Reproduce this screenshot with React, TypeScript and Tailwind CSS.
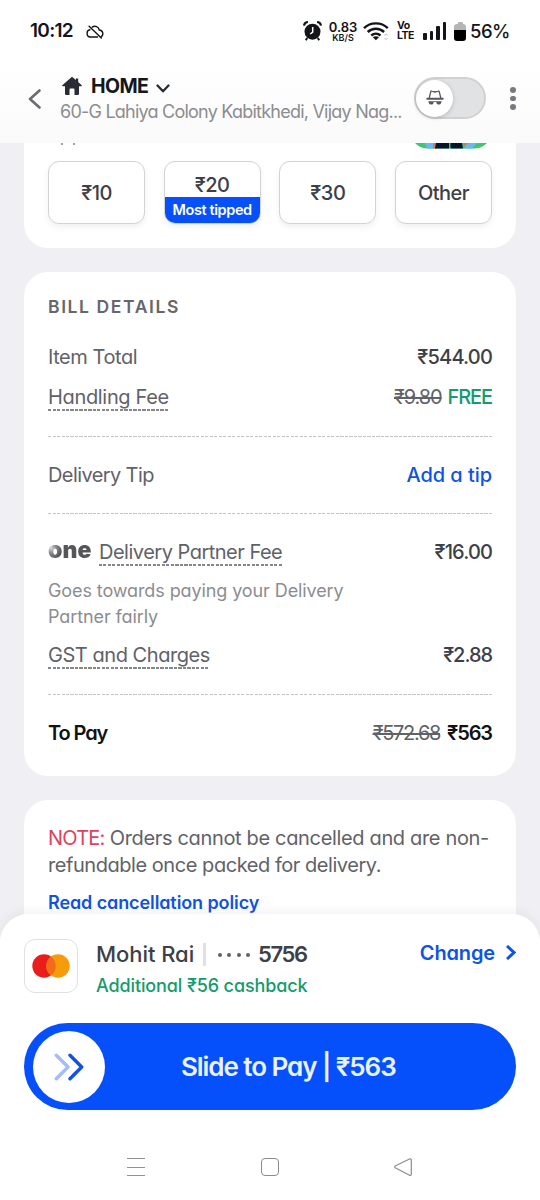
import type { ReactNode } from "react";
import { clsx } from "clsx";

const StatusBar = () => (
	<div className="flex h-[62px] shrink-0 items-center justify-between pl-[30px] pr-[31px] text-[#141518]">
		<div className="flex items-center gap-[13px]">
			<span className="w-[43px] whitespace-nowrap text-[19px] font-semibold tracking-[-0.7px]">
				10:12
			</span>
			<svg className="mt-px h-[14px] w-[18px]" viewBox="0 0 18 14" fill="none" stroke="currentColor" strokeWidth="1.4" strokeLinecap="round">
				<path d="M6.2 2.1C9 .3 12.6 1.5 13.3 5c4 .2 4.6 5.2 1.8 6.8" />
				<path d="M3.9 4.8C.2 5.2 0 11.8 4.2 12h7.4" />
				<path d="M3.1 1.2l12.2 11.9" />
			</svg>
		</div>
		<div className="flex items-center">
			<svg className="h-5 w-[19px]" viewBox="0 0 19 20" fill="currentColor">
				<circle cx="9.5" cy="10.7" r="8" />
				<path d="M1 4.6C1.3 2.6 2.9 1.2 4.9 1M18 4.6c-.3-2-1.9-3.4-3.9-3.6" fill="none" stroke="currentColor" strokeWidth="2.2" />
				<path d="M4.2 17l-1.4 2.2M14.8 17l1.4 2.2" stroke="currentColor" strokeWidth="2" />
				<path d="M9.7 6v5.2L7.2 13" fill="none" stroke="#fff" strokeWidth="1.5" />
			</svg>
			<div className="ml-[7px] flex w-[28px] flex-col items-center whitespace-nowrap font-semibold">
				<span className="text-[13px] leading-[12px]">0.83</span>
				<span className="text-[9px] leading-[9px]">KB/S</span>
			</div>
			<svg className="ml-[6px] h-5 w-[26px]" viewBox="0 0 26 20" fill="none" stroke="currentColor" strokeWidth="2.4">
				<path d="M1 7.2c6.5-6.4 17.3-6.4 23.8 0" />
				<path d="M4.7 11c4.6-4.3 11.8-4.3 16.4 0" />
				<path d="M8.3 14.5c2.7-2.3 6.5-2.3 9.2 0" />
				<path d="M9.8 16.2c1.9-1.4 4.3-1.4 6.2 0l-3.1 3z" fill="currentColor" stroke="none" />
				<path d="M21.5 14.5l1.6-1.7 1.6 1.7M21.5 17l1.6 1.7 1.6-1.7" stroke="#bbb" strokeWidth="1" />
			</svg>
			<div className="ml-[8px] flex w-[17px] flex-col whitespace-nowrap text-[10.5px] font-bold leading-[10px] tracking-[-0.5px]">
				<span>Vo</span>
				<span>LTE</span>
			</div>
			<div className="ml-[9px] flex h-[18px] w-[23px] items-end justify-between">
				<i className="h-[7px] w-[3.5px] rounded-[1px] bg-current" />
				<i className="h-[9.5px] w-[3.5px] rounded-[1px] bg-current" />
				<i className="h-[14px] w-[3.5px] rounded-[1px] bg-current" />
				<i className="h-[18px] w-[3.5px] rounded-[1px] bg-current" />
			</div>
			<div className="ml-[8px] flex flex-col items-center">
				<i className="h-[2px] w-[5px] rounded-t-[1px] bg-[#b5b5b5]" />
				<i className="h-[6px] w-3 rounded-t-[3px] bg-[#b5b5b5]" />
				<i className="h-[11px] w-3 rounded-b-[3px] bg-black" />
			</div>
			<span className="ml-[4px] w-[39px] whitespace-nowrap pt-[2px] text-[18.5px] font-medium tracking-[-0.5px]">
				56%
			</span>
		</div>
	</div>
);

const AddressBar = () => (
	<div className="flex h-[81px] shrink-0 items-start bg-gradient-to-b from-white to-[#fafafb] pl-[28px] pt-[12px]">
		<svg className="mt-[15px] h-[20px] w-[13px]" viewBox="0 0 13 20" fill="none" stroke="#6a6c72" strokeWidth="2.6" strokeLinecap="round" strokeLinejoin="round">
			<path d="M11.5 1.5L2 10l9.5 8.5" />
		</svg>
		<div className="ml-[19px] w-[345px]">
			<div className="flex h-[26px] items-center">
				<svg className="-mt-[3px] ml-[2px] h-[20px] w-[20px]" viewBox="0 0 20 20" fill="#282c34">
					<path d="M10 .7L.3 9.2q-.5.8.4 1H3v7.6q0 1.200 1.200 1.200h3.300v-5.500q0-1 1-1h3q1 0 1 1V19h3.300q1.200 0 1.200-1.200v-7.600h2.300q.9-.2.400-1L16.200 6V2.600h-2.300V4z" />
				</svg>
				<h1 className="ml-[9px] w-[58px] whitespace-nowrap text-[19.5px] font-bold tracking-[-0.55px] text-[#15171c]">
					HOME
				</h1>
				<svg className="ml-[7px] mt-[3px] h-[9px] w-[14px]" viewBox="0 0 14 9" fill="none" stroke="#282c34" strokeWidth="2.3" strokeLinecap="round" strokeLinejoin="round">
					<path d="M1.5 1.5L7 7.3l5.5-5.8" />
				</svg>
			</div>
			<p className="whitespace-nowrap text-[18px] leading-[24px] tracking-[-0.77px] text-[#8c8d90]">
				60-G Lahiya Colony Kabitkhedi, Vijay Nag...
			</p>
		</div>
		<div className="ml-[9px] mt-[3px] flex h-[42px] w-[72px] items-center rounded-full border-2 border-[#d0d1d3] bg-[#e1e2e4]">
			<div className="flex size-[37px] items-center justify-center rounded-full bg-white shadow-[0_1px_4px_rgba(0,0,0,0.2)]">
				<svg className="h-[16px] w-[18px]" viewBox="0 0 18 16" fill="none" stroke="#55575c" strokeWidth="1.3" strokeLinejoin="round" strokeLinecap="round">
					<path d="M1 9v-.6h16V9zM3.200 8L4.700 1.800q.3-1 1.300-.6L9 2l3-.8q1-.4 1.300.6L14.800 8" />
					<path d="M2.200 11.300h13.600l-.8 2q-.5 1.200-1.800 1.200h-1q-1.200 0-1.500-1l-.5-1.500H7.800l-.5 1.500q-.3 1-1.500 1h-1q-1.300 0-1.800-1.200z" fill="#55575c" stroke="none" />
				</svg>
			</div>
		</div>
		<div className="ml-[24px] mt-[13px] flex flex-col gap-[3px]">
			<i className="size-[5.5px] rounded-full bg-[#77797d]" />
			<i className="size-[5.5px] rounded-full bg-[#77797d]" />
			<i className="size-[5.5px] rounded-full bg-[#77797d]" />
		</div>
	</div>
);

const TipOption = ({ label, popular }: { label: string; popular?: boolean }) => (
	<button
		className={clsx(
			"flex h-[63px] w-[97px] flex-col items-center overflow-hidden rounded-[11px] border border-[#d2d3d5] bg-white text-[20px] font-medium tracking-[-0.5px] text-[#3d4047] shadow-[0_3px_6px_rgba(0,0,0,0.06)]",
			!popular && "justify-center",
		)}
	>
		<span className={popular ? "h-[35px] pt-[7px] leading-[32px]" : "leading-[30px]"}>{label}</span>
		{popular && (
			<span className="flex w-full flex-1 items-center justify-center whitespace-nowrap bg-[#0550fb] text-[14.5px] font-semibold tracking-[-0.4px] text-white">
				Most tipped
			</span>
		)}
	</button>
);

const TipCard = () => (
	<section className="h-[105px] shrink-0 rounded-b-[24px] bg-white px-6">
		<div className="flex h-[18px] items-start justify-between pl-[13px] pr-[5px]">
			<div className="flex gap-[10px]">
				<i className="h-[2px] w-[2px] bg-[#a0a1a4]" />
				<i className="h-[2px] w-[2px] bg-[#a0a1a4]" />
			</div>
			<svg className="h-[6px] w-[72px]" viewBox="0 0 72 6">
				<path d="M0 0h72q-5 5.500-13 5.500H13Q5 5.500 0 0z" fill="#3fc573" />
				<path d="M10 0h9v5.500h-7zM50 0h12l-5 5.500h-7z" fill="#6bb6f5" />
				<path d="M18 0h4v5.500h-4zM48 0h6l-4 3z" fill="#dd7756" />
				<path d="M21 0h13v5.500H20zM35.500 0H47l1 5.500H35.500z" fill="#06142e" />
			</svg>
		</div>
		<div className="flex justify-between">
			<TipOption label="₹10" />
			<TipOption label="₹20" popular />
			<TipOption label="₹30" />
			<TipOption label="Other" />
		</div>
	</section>
);

const Divider = () => (
	<div className="h-px bg-[repeating-linear-gradient(90deg,#c3c4c6_0_3px,transparent_3px_4.5px)]" />
);

const DottedLabel = ({ children }: { children: ReactNode }) => (
	<span className="flex flex-col">
		<span className="h-[26px] leading-[26px]">{children}</span>
		<span className="-mt-px h-[1.5px] bg-[repeating-linear-gradient(90deg,#85878b_0_3px,transparent_3px_4.5px)]" />
	</span>
);

const OneLogo = () => (
	<span className="mr-[7px] w-[44px] whitespace-nowrap bg-[radial-gradient(circle_at_3px_9px,#d9d9db_0,#8a8a8e_5px,#55555a_11px)] bg-clip-text text-[23px] font-black leading-[22px] tracking-[0.1px] text-transparent">
		one
	</span>
);

const BillDetails = () => (
	<section className="mt-6 h-[504px] shrink-0 rounded-[24px] bg-white px-6 text-[20px] tracking-[-0.45px] text-[#606268]">
		<h2 className="flex h-[70px] items-center pt-px text-[17.5px] font-semibold tracking-[1.6px] text-[#65676c]">
			BILL DETAILS
		</h2>
		<div className="flex h-[30px] items-center justify-between">
			<span>Item Total</span>
			<span className="font-medium tracking-[-0.8px] text-[#3d4047]">₹544.00</span>
		</div>
		<div className="flex h-[64px] items-start justify-between pt-[12px] leading-[26px]">
			<DottedLabel>
				<span className="tracking-[-0.33px]">Handling Fee</span>
			</DottedLabel>
			<span className="flex gap-[6px] tracking-[-1.1px]">
				<s>₹9.80</s>
				<b className="font-medium text-[#159b6c]">FREE</b>
			</span>
		</div>
		<Divider />
		<div className="flex h-[76px] items-center justify-between">
			<span className="tracking-[-0.6px]">Delivery Tip</span>
			<button className="font-medium tracking-[-0.05px] text-[#0f53e4]">Add a tip</button>
		</div>
		<Divider />
		<div className="flex h-[64px] items-start justify-between pt-[25px] leading-[26px]">
			<span className="flex tracking-[-0.5px]">
				<OneLogo />
				<DottedLabel>Delivery Partner Fee</DottedLabel>
			</span>
			<span className="font-medium tracking-[-0.85px] text-[#3d4047]">₹16.00</span>
		</div>
		<p className="w-[320px] text-[18px] leading-[26px] tracking-[-0.1px] text-[#8c8d90]">
			Goes towards paying your Delivery Partner fairly
		</p>
		<div className="flex h-[64px] items-start justify-between pt-[12px] leading-[26px]">
			<DottedLabel>GST and Charges</DottedLabel>
			<span className="font-medium tracking-[-1.05px] text-[#3d4047]">₹2.88</span>
		</div>
		<Divider />
		<div className="flex h-[76px] items-center justify-between font-semibold tracking-[-1.1px] text-[#111216]">
			<span>To Pay</span>
			<span className="flex gap-[7px]">
				<s className="font-normal tracking-[-1.3px] text-[#606268]">₹572.68</s>
				₹563
			</span>
		</div>
	</section>
);

const CancellationNote = () => (
	<section className="mt-6 h-[140px] shrink-0 rounded-t-[24px] bg-white px-6 pt-[25px]">
		<p className="whitespace-nowrap text-[20px] leading-[27px] tracking-[-0.34px] text-[#606268]">
			<span className="tracking-[-0.8px] text-[#dd4361]">NOTE:</span> Orders cannot be cancelled and are non-
			<br />
			<span className="tracking-[-0.45px]">refundable once packed for delivery.</span>
		</p>
		<a className="mt-[10px] block whitespace-nowrap text-[18px] font-semibold leading-[27px] tracking-[-0.1px] text-[#0f53e4]">
			Read cancellation policy
		</a>
	</section>
);

const PaymentSheet = () => (
	<footer className="z-10 -mt-6 h-[286px] shrink-0 rounded-t-[28px] bg-white px-6 shadow-[0_-3px_12px_rgba(0,0,0,0.05)]">
		<div className="flex h-[109px] items-start pt-[25px]">
			<div className="flex size-[54px] items-center justify-center rounded-[11px] border border-[#e0e1e3]">
				<svg className="h-6 w-[38px]" viewBox="0 0 38 24">
					<circle cx="12" cy="12" r="11.7" fill="#ea1d1c" />
					<circle cx="26" cy="12" r="11.7" fill="#f79b0b" />
					<path d="M19 2.600a11.700 11.700 0 0 1 0 18.800 11.700 11.700 0 0 1 0-18.800z" fill="#f26b17" />
				</svg>
			</div>
			<div className="ml-[18px] flex-1">
				<div className="flex h-[31px] items-center whitespace-nowrap text-[22px] font-medium tracking-[-0.05px] text-[#3d4047]">
					<span className="w-[98px]">Mohit Rai</span>
					<i className="ml-[9px] h-[23px] w-[3px] bg-[#dfe0e3]" />
					<span className="ml-[12px] flex w-[32px] justify-between">
						<i className="size-1 rounded-full bg-[#606268]" />
						<i className="size-1 rounded-full bg-[#606268]" />
						<i className="size-1 rounded-full bg-[#606268]" />
						<i className="size-1 rounded-full bg-[#606268]" />
					</span>
					<span className="ml-[8px] font-semibold tracking-[-1.4px]">5756</span>
				</div>
				<p className="whitespace-nowrap text-[18px] font-medium leading-[32px] tracking-[-0.12px] text-[#159b6c]">
					Additional ₹56 cashback
				</p>
			</div>
			<button className="flex h-[27px] items-center text-[20px] font-semibold tracking-[-0.15px] text-[#0f53e4]">
				Change
				<svg className="ml-[11px] h-[15px] w-[10px]" viewBox="0 0 10 15" fill="none" stroke="currentColor" strokeWidth="3">
					<path d="M1 1l7 6.500L1 14" />
				</svg>
			</button>
		</div>
		<div className="flex h-[87px] items-center rounded-full bg-[#0550fb] pl-[9px]">
			<div className="flex size-[72px] items-center justify-center rounded-full bg-white">
				<svg className="mr-px h-[28px] w-[30px]" viewBox="0 0 30 28" fill="none" strokeWidth="3.4" strokeLinecap="round" strokeLinejoin="round">
					<path d="M2.300 2.300L14 14 2.300 25.700" stroke="#a3bdf6" />
					<path d="M16 2.300L27.700 14 16 25.700" stroke="#1451de" />
				</svg>
			</div>
			<span className="ml-[76px] whitespace-nowrap text-[26px] font-semibold tracking-[-1.05px] text-[#eaf1ff]">
				Slide to Pay | ₹563
			</span>
		</div>
		<nav className="flex h-[90px] items-center justify-between pl-[103px] pr-[104px] pt-[24px]">
			<div className="flex h-[18px] w-[18px] flex-col justify-between">
				<i className="h-px bg-[#929292]" />
				<i className="h-px bg-[#929292]" />
				<i className="h-px bg-[#929292]" />
			</div>
			<div className="size-[18px] rounded-[4px] border border-[#8c8c8c]" />
			<svg className="h-[18px] w-[18px]" viewBox="0 0 18 18" fill="none" stroke="#8c8c8c" strokeWidth="1.2" strokeLinejoin="round">
				<path d="M1.200 8q-1 .9 0 1.700l14.300 7.500q1.700.6 1.800-1V2q-.1-1.600-1.800-1z" />
			</svg>
		</nav>
	</footer>
);

export default function App() {
	return (
		<div className="flex h-[1200px] w-[540px] flex-col overflow-hidden bg-white font-[Inter,sans-serif] [font-feature-settings:'cv11']">
			<StatusBar />
			<AddressBar />
			<main className="flex min-h-0 flex-1 flex-col overflow-hidden bg-[#efeff4] px-6 pb-0">
				<TipCard />
				<BillDetails />
				<CancellationNote />
			</main>
			<PaymentSheet />
		</div>
	);
}
